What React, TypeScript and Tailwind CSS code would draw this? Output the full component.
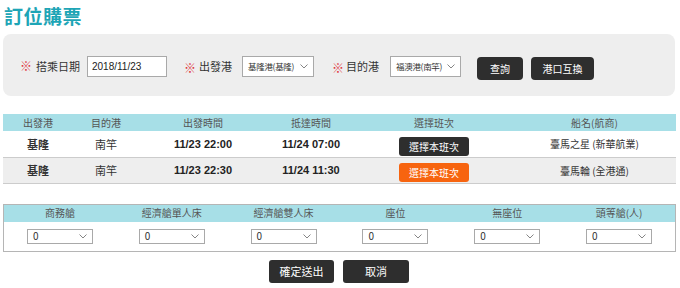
const FONT = "[font-family:'Noto_Sans_CJK_TC','Liberation_Sans',sans-serif]";

const flights = [
  { from: "基隆", to: "南竿", dep: "11/23 22:00", arr: "11/24 07:00", ship: "臺馬之星 (新華航業)", active: false },
  { from: "基隆", to: "南竿", dep: "11/23 22:30", arr: "11/24 11:30", ship: "臺馬輪 (全港通)", active: true },
];

const cabins = ["商務艙", "經濟艙單人床", "經濟艙雙人床", "座位", "無座位", "頭等艙(人)"];

function Chevron() {
  return (
    <svg width="8" height="5" viewBox="0 0 8 5" className="shrink-0">
      <path d="M0.5 0.5 L4 4 L7.5 0.5" fill="none" stroke="#777" strokeWidth="0.9" />
    </svg>
  );
}

function Select({ value, w, h = "h-[21px]", text = "text-[10px]" }: { value: string; w: string; h?: string; text?: string }) {
  return (
    <div className={`${w} ${h} flex items-center justify-between border border-[#a9a9a9] bg-white pl-[5px] pr-[5px] gap-[3px]`}>
      <span className={`${text} text-[#333] leading-none whitespace-nowrap tracking-[-0.3px]`}>{value}</span>
      <Chevron />
    </div>
  );
}

function Mark() {
  return <span className="inline-block w-[10px] text-[#e0353d] text-[12px] leading-none font-bold">※</span>;
}

export default function App() {
  return (
    <div className={`w-[680px] h-[288px] bg-white overflow-hidden ${FONT}`}>
      <h1 className="text-[19px] font-bold text-[#1ea5b6] leading-none pl-[4px] pt-[6px] tracking-[0.5px]">訂位購票</h1>

      {/* search panel */}
      <div className="mt-[9px] ml-[3px] w-[672px] h-[62px] rounded-[8px] bg-[#eeeeee] flex items-center pl-[17px] pt-[2px]">
        <Mark />
        <span className="ml-[6px] w-[43px] text-[11px] text-[#333] whitespace-nowrap">搭乘日期</span>
        <div className="ml-[8px] w-[80px] h-[21px] border border-[#a9a9a9] bg-white flex items-center pl-[4px] text-[10px] text-[#222] [font-family:'Liberation_Sans',sans-serif]">2018/11/23</div>
        <span className="ml-[17px]"><Mark /></span>
        <span className="ml-[5px] w-[33px] text-[11px] text-[#333] whitespace-nowrap">出發港</span>
        <div className="ml-[10px]"><Select value="基隆港(基隆)" w="w-[72px]" text="text-[8.5px]" /></div>
        <span className="ml-[18px]"><Mark /></span>
        <span className="ml-[4px] w-[33px] text-[11px] text-[#333] whitespace-nowrap">目的港</span>
        <div className="ml-[11px]"><Select value="福澳港(南竿)" w="w-[71px]" text="text-[8.5px]" /></div>
        <button className="ml-[16px] w-[46px] h-[23px] rounded-[4px] bg-[#2e2e2e] text-white text-[10px] mt-[4px]">查詢</button>
        <button className="ml-[8px] w-[63px] h-[23px] rounded-[4px] bg-[#2e2e2e] text-white text-[10px] mt-[4px]">港口互換</button>
      </div>

      {/* flight table */}
      <table className="mt-[18px] ml-[3px] w-[673px] border-collapse table-fixed">
        <colgroup>
          <col className="w-[70px]" />
          <col className="w-[66px]" />
          <col className="w-[128px]" />
          <col className="w-[88px]" />
          <col className="w-[158px]" />
          <col />
        </colgroup>
        <thead>
          <tr className="bg-[#a7dfe7] h-[17px]">
            {["出發港", "目的港", "出發時間", "抵達時間", "選擇班次", "船名(航商)"].map((t) => (
              <th key={t} className="font-normal text-[10px] text-[#555] text-center p-0 leading-none">{t}</th>
            ))}
          </tr>
        </thead>
        <tbody>
          {flights.map((f, i) => (
            <tr key={i} className={`h-[26px] border-b border-[#cccccc] ${i === 1 ? "bg-[#eeeeee]" : "bg-white"}`}>
              <td className="text-center text-[11px] font-bold text-[#333] p-0">{f.from}</td>
              <td className="text-center text-[11px] text-[#333] p-0">{f.to}</td>
              <td className="text-center text-[11px] font-bold text-[#222] p-0 [font-family:'Liberation_Sans',sans-serif]">{f.dep}</td>
              <td className="text-center text-[11px] font-bold text-[#222] p-0 [font-family:'Liberation_Sans',sans-serif]">{f.arr}</td>
              <td className="text-center p-0">
                <button className={`w-[70px] h-[19px] rounded-[3px] text-white text-[10px] leading-none ${f.active ? "bg-[#f7640f]" : "bg-[#2e2e2e]"}`}>選擇本班次</button>
              </td>
              <td className="text-center text-[10px] text-[#333] p-0">{f.ship}</td>
            </tr>
          ))}
        </tbody>
      </table>

      {/* cabin counts */}
      <div className="mt-[20px] ml-[3px] w-[673px] h-[48px] border border-[#b5b5b5]">
        <div className="grid grid-cols-6 h-[17px] bg-[#a7dfe7] items-center">
          {cabins.map((c) => (
            <div key={c} className="text-center text-[10px] text-[#555] leading-none">{c}</div>
          ))}
        </div>
        <div className="grid grid-cols-6 h-[29px] items-center">
          {cabins.map((c) => (
            <div key={c} className="flex justify-center">
              <Select value="0" w="w-[66px]" h="h-[15px]" />
            </div>
          ))}
        </div>
      </div>

      <div className="mt-[8px] flex justify-center gap-[9px] pr-[2px]">
        <button className="w-[65px] h-[23px] rounded-[3px] bg-[#2e2e2e] text-white text-[11px]">確定送出</button>
        <button className="w-[66px] h-[23px] rounded-[3px] bg-[#2e2e2e] text-white text-[11px]">取消</button>
      </div>
    </div>
  );
}
